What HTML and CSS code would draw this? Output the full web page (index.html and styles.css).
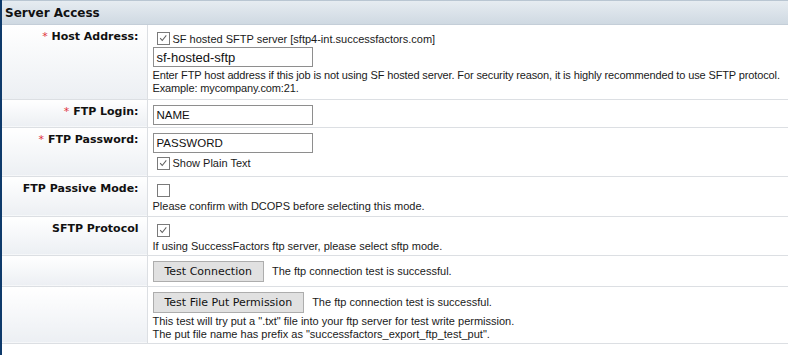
FILE: index.html
```html
<!DOCTYPE html>
<html lang="en">
<head>
    <meta charset="UTF-8">
    <title>Server Access</title>
    <link rel="stylesheet" href="styles.css">
</head>
<body>
    <div class="panel">
        <div class="panel-header">Server Access</div>

        <table class="form-table">
            <!-- Host -->
            <tr class="row-host">
                <td class="label"><span class="req">*</span> Host Address:</td>
                <td class="field">
                    <div class="check-line">
                        <span class="checkbox checked"><svg viewBox="0 0 13 13"><path d="M2.5 6 L5 8.8 L9.8 2.8"/></svg></span>
                        SF hosted SFTP server [sftp4-int.successfactors.com]
                    </div>
                    <div class="text-input">sf-hosted-sftp</div>
                    <div class="hint long">Enter FTP host address if this job is not using SF hosted server. For security reason, it is highly recommended to use SFTP protocol.<br>Example: mycompany.com:21.</div>
                </td>
            </tr>
            <!-- Login -->
            <tr class="row-login">
                <td class="label"><span class="req">*</span> FTP Login:</td>
                <td class="field">
                    <div class="text-input caps">NAME</div>
                </td>
            </tr>
            <!-- Password -->
            <tr class="row-password">
                <td class="label"><span class="req">*</span> FTP Password:</td>
                <td class="field">
                    <div class="text-input caps">PASSWORD</div>
                    <div class="check-line indent">
                        <span class="checkbox checked"><svg viewBox="0 0 13 13"><path d="M2.5 6 L5 8.8 L9.8 2.8"/></svg></span>
                        Show Plain Text
                    </div>
                </td>
            </tr>
            <!-- Passive -->
            <tr class="row-passive">
                <td class="label">FTP Passive Mode:</td>
                <td class="field">
                    <div class="check-line"><span class="checkbox"></span></div>
                    <div class="hint">Please confirm with DCOPS before selecting this mode.</div>
                </td>
            </tr>
            <!-- SFTP -->
            <tr class="row-sftp">
                <td class="label">SFTP Protocol</td>
                <td class="field">
                    <div class="check-line"><span class="checkbox checked"><svg viewBox="0 0 13 13"><path d="M2.5 6 L5 8.8 L9.8 2.8"/></svg></span></div>
                    <div class="hint">If using SuccessFactors ftp server, please select sftp mode.</div>
                </td>
            </tr>
            <!-- Test connection -->
            <tr class="row-test">
                <td class="label"></td>
                <td class="field">
                    <div class="button-line">
                        <button class="btn">Test Connection</button>
                        <span class="status">The ftp connection test is successful.</span>
                    </div>
                </td>
            </tr>
            <!-- Test put -->
            <tr class="row-put">
                <td class="label"></td>
                <td class="field">
                    <div class="button-line">
                        <button class="btn">Test File Put Permission</button>
                        <span class="status">The ftp connection test is successful.</span>
                    </div>
                    <div class="hint">This test will try put a ".txt" file into your ftp server for test write permission.<br>The put file name has prefix as "successfactors_export_ftp_test_put".</div>
                </td>
            </tr>
        </table>
    </div>
</body>
</html>
```

FILE: styles.css
```css
/* Reset */
* {
    margin: 0;
    padding: 0;
    box-sizing: border-box;
}

body {
    font-family: "Liberation Sans", Arial, sans-serif;
    font-size: 11px;
    color: #1a1a1a;
    background: #fff;
}

/* Panel with dark left edge */
.panel {
    border-left: 2px solid #0e3a6b;
    min-height: 355px;
}

.panel-header {
    height: 25px;
    padding: 5px 0 0 3px;
    border-top: 1px solid #b9c6d2;
    border-bottom: 1px solid #c4ced8;
    background: linear-gradient(#e6ecf1, #cfd9e2);
    font-family: "DejaVu Sans", Verdana, sans-serif;
    font-size: 12px;
    font-weight: bold;
    color: #111;
}

/* Form table */
.form-table {
    width: 100%;
    border-collapse: collapse;
    table-layout: fixed;
}

.form-table td {
    border-bottom: 1px solid #dcdfe3;
    vertical-align: top;
}

.label {
    width: 145px;
    padding: 5px 8px 0 0;
    text-align: right;
    border-right: 1px solid #dcdfe3;
    background: linear-gradient(#ffffff, #eceff3);
    font-family: "DejaVu Sans", Verdana, sans-serif;
    font-size: 11px;
    font-weight: bold;
    color: #111;
    white-space: nowrap;
}

.req {
    color: #e0303a;
    font-weight: normal;
}

.field {
    padding: 4px 0 0 5px;
    white-space: nowrap;
}

/* Row heights */
.row-host td { height: 74px; }
.row-login td { height: 28px; }
.row-password td { height: 49px; }
.row-passive td { height: 40px; }
.row-sftp td { height: 39px; }
.row-test td { height: 31px; }
.row-put td { height: 57px; }

/* Checkbox lines */
.check-line {
    display: flex;
    align-items: center;
    gap: 3px;
    height: 15px;
    margin: 2px 0 0 4px;
}

.check-line.indent {
    margin-top: 3px;
}

.checkbox {
    width: 13px;
    height: 13px;
    border: 1px solid #7a7a7a;
    background: #fff;
    display: inline-block;
}

.checkbox svg {
    width: 11px;
    height: 11px;
    display: block;
    fill: none;
    stroke: #606060;
    stroke-width: 1.2;
}

/* Fake text inputs */
.text-input {
    width: 160px;
    height: 20px;
    margin-top: 1px;
    padding: 2px 0 0 3px;
    border: 1px solid #8e8e8e;
    font-size: 13px;
    color: #111;
}

.text-input.caps {
    font-size: 11.5px;
    padding-top: 3px;
}

.hint {
    line-height: 13px;
    margin-top: 2px;
}

.hint.long {
    letter-spacing: -0.13px;
}

/* Buttons */
.button-line {
    display: flex;
    align-items: center;
    gap: 8px;
    margin-top: 1px;
}

.btn {
    height: 21px;
    padding: 0 11px;
    border: 1px solid #adadad;
    background: #e1e1e1;
    font-family: "DejaVu Sans", Verdana, sans-serif;
    font-size: 11px;
    color: #111;
}
```
